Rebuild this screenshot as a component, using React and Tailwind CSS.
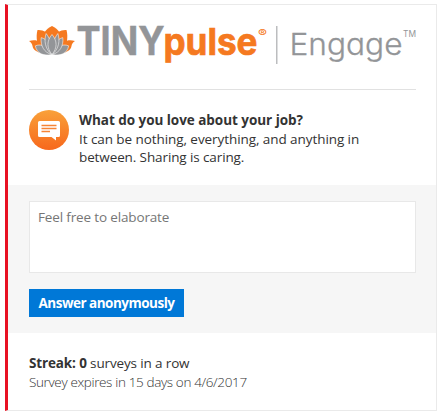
function Lotus() {
  return (
    <g strokeLinejoin="round">
      <g fill="#f57920">
        <path d="M23 0.5 C26 2 29 4 31 7.500 L28 13 H18 L15 7.500 C17 4 20 2 23 0.5Z" />
        <path d="M8.500 4.500 C14 4 19 7 23 12 C27 7 32 4 37.500 4.500 C38.500 8 38.500 12 38 15.500 L33 24 H13 L8 15.500 C7.500 12 7.500 8 8.500 4.500Z" />
        <path d="M0 15.500 C4 14.200 8 14.500 11 16.500 L19 28 C10 28.500 4 25 3.500 20.500 C3.200 18 2 17 0 15.500Z" />
        <path d="M46 15.500 C42 14.200 38 14.500 35 16.500 L27 28 C36 28.500 42 25 42.500 20.500 C42.800 18 44 17 46 15.500Z" />
      </g>
      <g fill="#939598" stroke="#fff" strokeWidth="0.6" transform="translate(2.3 2.6) scale(.9 .91)">
        <path d="M4.500 19.500 C12 16.500 18.500 21 22.500 29 C14 31 6 28 4.500 19.500Z" />
        <path d="M41.500 19.500 C34 16.500 27.500 21 23.500 29 C32 31 40 28 41.500 19.500Z" />
        <path d="M11 10.500 C17.500 12 22 18 22.800 29 C14 27 10 19 11 10.500Z" />
        <path d="M35 10.500 C28.500 12 24 18 23.200 29 C32 27 36 19 35 10.500Z" />
        <path d="M16.500 6 C21.500 12 23.500 21 22.800 29 C15 23 14 13 16.500 6Z" />
        <path d="M29.500 6 C24.500 12 22.500 21 23.200 29 C31 23 32 13 29.500 6Z" />
        <path d="M23 7 C29 14 29 22 23 29 C17 22 17 14 23 7Z" />
      </g>
    </g>
  );
}

function Logo() {
  return (
    <svg
      className="block h-10 w-[388px] overflow-visible"
      viewBox="29 25 388 40"
      fontFamily="Inter, sans-serif"
      role="img"
      aria-label="TINYpulse Engage"
    >
      <g transform="translate(29 25.5)">
        <Lotus />
      </g>
      <text x="76.500" y="55" fontSize="39.500" fontWeight="700" fill="#939598" stroke="#939598" strokeWidth="0.5" textLength="88" lengthAdjust="spacingAndGlyphs">TINY</text>
      <text x="163.500" y="54.700" fontSize="37.500" fontWeight="700" fill="#f57920" stroke="#f57920" strokeWidth="0.7" textLength="94" lengthAdjust="spacingAndGlyphs">pulse</text>
      <text x="258" y="37" fontSize="10.5" fill="#f57920" textLength="9" lengthAdjust="spacingAndGlyphs">®</text>
      <rect x="276" y="26" width="1.5" height="38" fill="#bcbdbf" />
      <text
        className="[font-feature-settings:'cv11']"
        x="289.5" y="55" fontSize="30" fontWeight="300" fill="#939598" stroke="#939598" strokeWidth="0.3"
        textLength="113" lengthAdjust="spacingAndGlyphs"
      >Engage</text>
      <text x="403" y="37" fontSize="8.5" fill="#939598" textLength="13" lengthAdjust="spacingAndGlyphs">TM</text>
    </svg>
  );
}

function ChatBadge() {
  return (
    <svg className="size-10 shrink-0" viewBox="0 0 40 40" aria-hidden="true">
      <defs>
        <linearGradient id="badge" x1="0" y1="0" x2="0" y2="1">
          <stop offset="0" stopColor="#f9a13a" />
          <stop offset="1" stopColor="#f7681c" />
        </linearGradient>
      </defs>
      <circle cx="20" cy="20" r="20" fill="url(#badge)" />
      <path d="M10.5 11 H29.5 Q31 11 31 12.5 V25.5 Q31 27 29.5 27 H27 V30.5 L22.5 27 H10.5 Q9 27 9 25.5 V12.5 Q9 11 10.5 11Z" fill="#fff" />
      <path d="M12.5 15.5 H27.5 M12.5 18.5 H27.5 M12.5 21.5 H21" stroke="#f68435" strokeWidth="1.3" />
    </svg>
  );
}

export default function App() {
  return (
    <div className="h-[416px] w-[443px] bg-white pt-1 pl-[5px] font-['Open_Sans',sans-serif] text-[13.5px] leading-[18.67px] whitespace-nowrap text-[#333]">
      <main className="flex h-[407px] w-[432px] flex-col border border-l-[3px] border-[#eaeaea] border-l-[#e81123]">
        <header className="mr-5 ml-[21px] flex h-[85px] shrink-0 flex-col border-b border-[#e1e1e1] pt-5">
          <Logo />
        </header>
        <section className="flex h-[95px] shrink-0 gap-[10px] pt-5 pl-[21px]">
          <ChatBadge />
          <div className="pt-px">
            <h1 className="font-bold tracking-[-0.04px]">What do you love about your job?</h1>
            <p className="tracking-[-0.07px]">It can be nothing, everything, and anything in</p>
            <p className="tracking-[-0.11px]">between. Sharing is caring.</p>
          </div>
        </section>
        <section className="h-[148px] shrink-0 bg-[#f6f6f6] pt-4 pr-5 pl-[21px]">
          <textarea
            className="block h-[72px] w-full resize-none border border-[#e8e8e8] bg-white px-2 py-[6px] tracking-[-0.15px] outline-none placeholder:text-[#767676]"
            placeholder="Feel free to elaborate"
          />
          <button className="mt-4 block h-7 w-[155px] bg-[#0078d7] pt-px font-bold tracking-[-0.5px] text-white">
            Answer anonymously
          </button>
        </section>
        <footer className="pt-[21px] pl-[21px]">
          <p className="tracking-[-0.14px]"><b>Streak: 0</b> surveys in a row</p>
          <p className="font-light tracking-[-0.36px]">Survey expires in 15 days on 4/6/2017</p>
        </footer>
      </main>
    </div>
  );
}
